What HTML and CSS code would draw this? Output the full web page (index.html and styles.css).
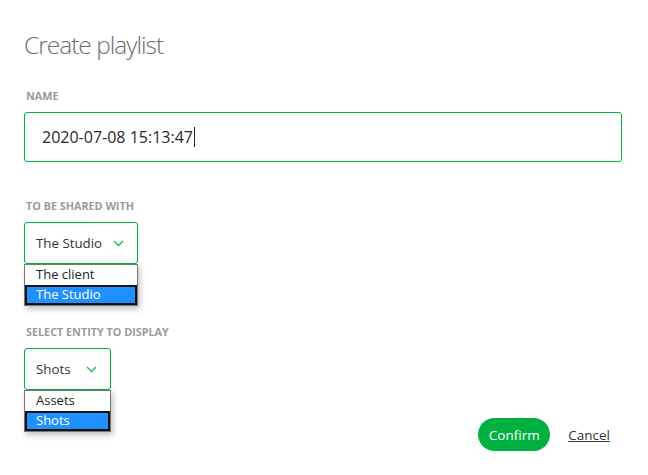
FILE: index.html
```html
<!DOCTYPE html>
<html>
<head>
<meta charset="utf-8">
<link rel="stylesheet" href="styles.css">
</head>
<body>
<div class="dialog">
  <h1 class="title">Create playlist</h1>

  <div class="label label-name">NAME</div>
  <div class="input"><span class="value">2020-07-08 15:13:47</span><span class="caret"></span></div>

  <div class="label label-shared">TO BE SHARED WITH</div>
  <div class="select-wrap">
    <div class="select select-shared">
      <span class="select-text">The Studio</span>
      <svg class="chev" width="11" height="7" viewBox="0 0 11 7"><polyline points="1,1 5.5,5.5 10,1" fill="none" stroke="#1db954" stroke-width="1.3"/></svg>
    </div>
    <div class="list list-shared">
      <div class="opt">The client</div>
      <div class="opt sel">The Studio</div>
    </div>
  </div>

  <div class="label label-entity">SELECT ENTITY TO DISPLAY</div>
  <div class="select-wrap">
    <div class="select select-entity">
      <span class="select-text">Shots</span>
      <svg class="chev" width="11" height="7" viewBox="0 0 11 7"><polyline points="1,1 5.5,5.5 10,1" fill="none" stroke="#1db954" stroke-width="1.3"/></svg>
    </div>
    <div class="list list-entity">
      <div class="opt">Assets</div>
      <div class="opt sel">Shots</div>
    </div>
  </div>

  <div class="footer">
    <button class="confirm">Confirm</button>
    <a class="cancel" href="#">Cancel</a>
  </div>
</div>
</body>
</html>
```

FILE: styles.css
```css
* { box-sizing: border-box; }
html, body { margin: 0; padding: 0; background: #fff; }
body { font-family: "Open Sans", "Noto Sans", sans-serif; color: #333; }

.dialog {
  width: 648px;
  padding: 0 26px 0 24px;
  display: flex;
  flex-direction: column;
  align-items: flex-start;
}

.title {
  margin: 29px 0 0 0;
  font-size: 24.5px;
  line-height: 32px;
  font-weight: 300;
  color: #6b6d70;
  letter-spacing: -1px;
}

.label {
  font-size: 10.8px;
  line-height: 12px;
  font-weight: 700;
  color: #9a9a9a;
  margin-left: 2px;
  letter-spacing: 0;
}
.label-name { margin-top: 29px; }
.label-shared { margin-top: 38px; }
.label-entity { margin-top: 62px; }

.input {
  margin-top: 10px;
  width: 598px;
  height: 50px;
  border: 1px solid #00b140;
  border-radius: 3px;
  display: flex;
  align-items: center;
  padding-left: 17px;
  font-size: 16px;
  color: #2a2a2a;
}
.caret {
  display: inline-block;
  width: 1px;
  height: 20px;
  background: #222;
  margin-left: 1px;
}

.select-wrap {
  position: relative;
  margin-top: 10px;
}
.select {
  height: 42px;
  border: 1px solid #00b140;
  border-radius: 3px;
  display: flex;
  align-items: center;
  padding-left: 11px;
  font-size: 13.3px;
  color: #333;
}
.select-shared { width: 114px; }
.select-entity { width: 87px; }
.select-text { flex: 0 0 auto; }
.select-shared .chev { margin-left: 11px; }
.select-entity .chev { margin-left: 15px; }

.list {
  position: absolute;
  left: 0;
  top: 42px;
  border: 1px solid #767676;
  background: #fff;
  box-shadow: 2px 3px 6px rgba(0,0,0,0.25);
  font-size: 13px;
  color: #222;
}
.list-shared { width: 114px; }
.list-entity { width: 87px; }
.opt {
  height: 20px;
  line-height: 19px;
  padding-left: 11px;
}
.opt.sel {
  background: #1e90ff;
  color: #fff;
  border: 2px solid #111;
  padding-left: 9px;
  line-height: 15px;
}

.footer {
  align-self: stretch;
  margin-top: 28px;
  display: flex;
  justify-content: flex-end;
  align-items: center;
  padding-right: 12px;
}
.confirm {
  height: 33px;
  width: 72px;
  border: none;
  border-radius: 17px;
  background: #00b140;
  color: #fff;
  font-family: inherit;
  font-size: 13.5px;
  padding: 0;
}
.cancel {
  margin-left: 18px;
  color: #333;
  font-size: 13.5px;
  text-decoration: underline;
}
```
